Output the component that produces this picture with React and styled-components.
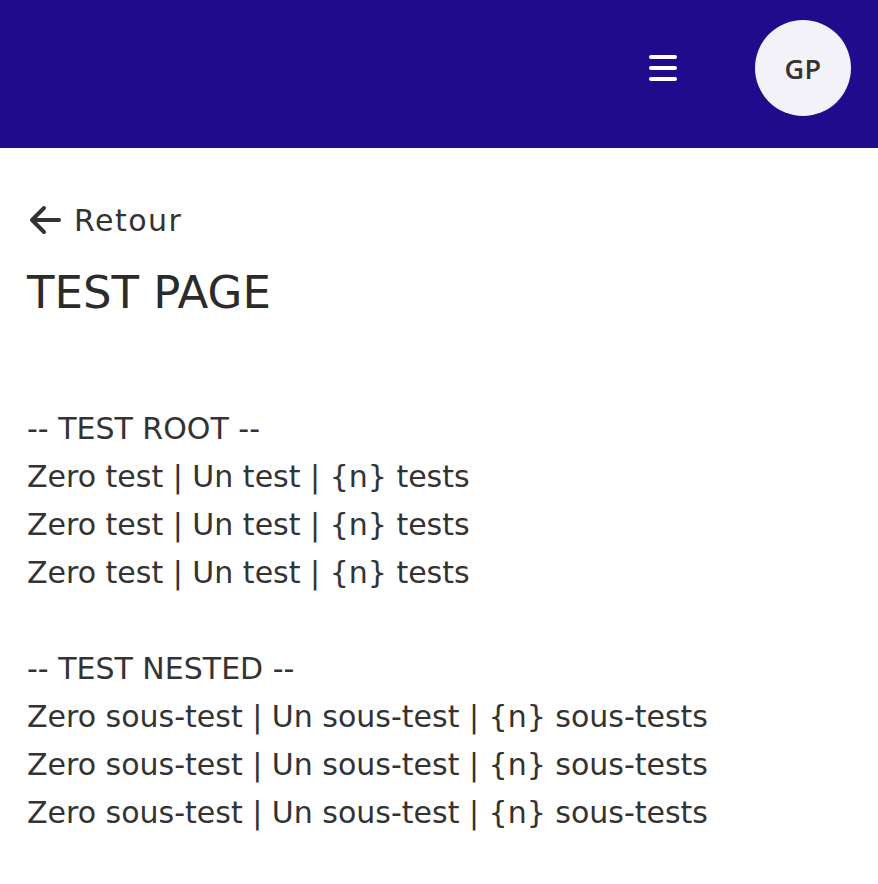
import React from 'react';
import styled, { createGlobalStyle } from 'styled-components';

const GlobalStyle = createGlobalStyle`
  * { box-sizing: border-box; }
  body {
    margin: 0;
    background: #ffffff;
    font-family: 'DejaVu Sans', 'Open Sans', sans-serif;
    color: #333333;
  }
`;

const Header = styled.header`
  height: 148px;
  background: #210b8d;
  display: flex;
  align-items: center;
  justify-content: flex-end;
  padding: 0 27px 12px 0;
  gap: 78px;
`;

const MenuButton = styled.button`
  width: 28px;
  height: 26px;
  padding: 0;
  border: none;
  background: transparent;
  display: flex;
  flex-direction: column;
  justify-content: space-between;
  cursor: pointer;
  span {
    display: block;
    height: 4px;
    border-radius: 2px;
    background: #ffffff;
  }
`;

const Avatar = styled.div`
  width: 96px;
  height: 96px;
  border-radius: 50%;
  background: #f3f2f8;
  display: flex;
  align-items: center;
  justify-content: center;
  font-family: 'Open Sans', 'DejaVu Sans', sans-serif;
  font-size: 27px;
  font-weight: 600;
  color: #333333;
  letter-spacing: 0.5px;
`;

const Main = styled.main`
  padding: 52px 27px 40px;
`;

const BackLink = styled.a`
  display: inline-flex;
  align-items: center;
  gap: 13px;
  font-size: 30px;
  letter-spacing: 1.5px;
  color: #333333;
  text-decoration: none;
  height: 40px;
`;

const Title = styled.h1`
  margin: 23px 0 0;
  font-size: 45px;
  font-weight: 500;
  line-height: 60px;
  color: #2b2b2b;
`;

const Lines = styled.div`
  margin-top: 82px;
  font-size: 30px;
  line-height: 48px;
`;

const Line = styled.div`
  height: 48px;
  white-space: nowrap;
`;

const ArrowIcon = () => (
  <svg width="34" height="32" viewBox="0 0 34 32" fill="none">
    <path
      d="M32 16 H5 M17 4 L5 16 L17 28"
      stroke="#333333"
      strokeWidth="4"
      strokeLinecap="round"
      strokeLinejoin="round"
    />
  </svg>
);

const lines = [
  '-- TEST ROOT --',
  'Zero test | Un test | {n} tests',
  'Zero test | Un test | {n} tests',
  'Zero test | Un test | {n} tests',
  '',
  '-- TEST NESTED --',
  'Zero sous-test | Un sous-test | {n} sous-tests',
  'Zero sous-test | Un sous-test | {n} sous-tests',
  'Zero sous-test | Un sous-test | {n} sous-tests',
];

export default function App() {
  return (
    <>
      <GlobalStyle />
      <Header>
        <MenuButton aria-label="menu">
          <span />
          <span />
          <span />
        </MenuButton>
        <Avatar>GP</Avatar>
      </Header>
      <Main>
        <BackLink href="#">
          <ArrowIcon />
          Retour
        </BackLink>
        <Title>TEST PAGE</Title>
        <Lines>
          {lines.map((l, i) => (
            <Line key={i}>{l}</Line>
          ))}
        </Lines>
      </Main>
    </>
  );
}
